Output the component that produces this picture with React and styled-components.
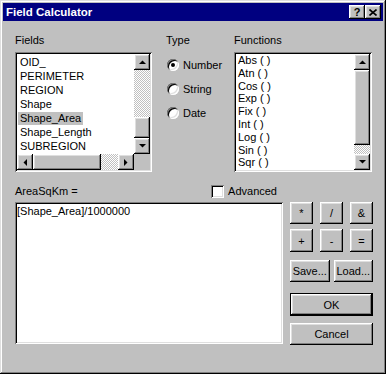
import React from 'react';
import styled, { createGlobalStyle, css } from 'styled-components';

const GlobalStyle = createGlobalStyle`
  html, body { margin: 0; padding: 0; background: #c0c0c0; }
  body {
    font-family: "Liberation Sans", Arial, sans-serif;
    font-size: 11px;
    color: #000;
  }
  * { box-sizing: border-box; }
`;

const raised = css`
  background: #c0c0c0;
  box-shadow: inset -1px -1px #000, inset 1px 1px #fff,
    inset -2px -2px #808080, inset 2px 2px #dfdfdf;
`;

const sunken = css`
  background: #fff;
  box-shadow: inset 1px 1px #808080, inset -1px -1px #fff,
    inset 2px 2px #000, inset -2px -2px #dfdfdf;
`;

const dither = css`
  background-color: #c0c0c0;
  background-image: conic-gradient(#fff 25%, #c0c0c0 0 50%, #fff 0 75%, #c0c0c0 0);
  background-size: 2px 2px;
`;

const Window = styled.div`
  width: 386px;
  height: 374px;
  padding: 3px;
  display: flex;
  flex-direction: column;
  background: #c0c0c0;
  box-shadow: inset -1px -1px #000, inset 1px 1px #dfdfdf,
    inset -2px -2px #808080, inset 2px 2px #fff;
`;

const TitleBar = styled.div`
  height: 18px;
  background: #000080;
  color: #fff;
  display: flex;
  align-items: center;
  padding: 0 2px 0 3px;
`;

const Title = styled.div`
  flex: 1;
  font-weight: bold;
  font-size: 11.5px;
`;

const TitleButton = styled.div`
  ${raised};
  width: 16px;
  height: 14px;
  display: flex;
  align-items: center;
  justify-content: center;
  color: #000;
  font-weight: bold;
  font-size: 11px;
`;

const Body = styled.div`
  flex: 1;
  padding: 13px 10px 0 12px;
  display: flex;
  flex-direction: column;
`;

const TopRow = styled.div`
  display: flex;
`;

const Column = styled.div`
  width: ${p => p.w}px;
  margin-right: ${p => p.mr || 0}px;
  display: flex;
  flex-direction: column;
`;

const Label = styled.div`
  height: 12px;
  line-height: 12px;
  margin-bottom: 6px;
`;

const ListBox = styled.div`
  ${sunken};
  height: 120px;
  padding: 2px;
  display: flex;
  flex-direction: column;
`;

const ListMain = styled.div`
  flex: 1;
  min-height: 0;
  display: flex;
`;

const Items = styled.div`
  flex: 1;
  overflow: hidden;
  padding-top: ${p => p.top || 0}px;
  padding-left: ${p => p.left || 0}px;
`;

const Row = styled.div`
  height: ${p => p.h}px;
  line-height: ${p => p.h}px;
  white-space: nowrap;
`;

const ItemText = styled.span`
  display: inline-block;
  line-height: 13px;
  padding: 0 2px;
  background: ${p => (p.selected ? '#c0c0c0' : 'transparent')};
`;

const ScrollBar = styled.div`
  display: flex;
  flex-direction: ${p => (p.horizontal ? 'row' : 'column')};
  ${p => (p.horizontal ? 'height: 16px; flex: 1;' : 'width: 16px;')}
`;

const BottomScrollRow = styled.div`
  height: 16px;
  display: flex;
`;

const ArrowButton = styled.div`
  ${raised};
  width: 16px;
  height: 16px;
  flex: none;
  display: flex;
  align-items: center;
  justify-content: center;
`;

const Track = styled.div`
  ${dither};
  flex: 1;
  display: flex;
  flex-direction: ${p => (p.horizontal ? 'row' : 'column')};
`;

const Gap = styled.div`
  flex: none;
  ${p => (p.horizontal ? `width: ${p.size}px;` : `height: ${p.size}px;`)}
`;

const Thumb = styled.div`
  ${raised};
  flex: none;
  ${p => (p.horizontal ? `width: ${p.size}px;` : `height: ${p.size}px;`)}
`;

const Corner = styled.div`
  width: 16px;
  height: 16px;
  background: #c0c0c0;
`;

const RadioGroup = styled.div`
  padding-top: 1px;
  display: flex;
  flex-direction: column;
`;

const RadioRow = styled.div`
  height: 24px;
  display: flex;
  align-items: center;
  gap: 4px;
  padding-left: 1px;
`;

const RadioCircle = styled.div`
  width: 12px;
  height: 12px;
  border-radius: 50%;
  position: relative;
  background: #fff;
  box-shadow: inset 1px 1px #808080, inset -1px -1px #fff,
    inset 2px 2px #000, inset -2px -2px #dfdfdf;
  &::after {
    content: '';
    display: ${p => (p.checked ? 'block' : 'none')};
    position: absolute;
    left: 4px;
    top: 4px;
    width: 4px;
    height: 4px;
    border-radius: 50%;
    background: #000;
  }
`;

const BottomRow = styled.div`
  margin-top: 12px;
  display: flex;
  gap: 7px;
`;

const ExprColumn = styled.div`
  width: 268px;
  display: flex;
  flex-direction: column;
`;

const ExprHeader = styled.div`
  height: 14px;
  margin-bottom: 4px;
  display: flex;
  align-items: center;
  justify-content: space-between;
  padding-right: 6px;
`;

const CheckLabel = styled.label`
  display: flex;
  align-items: center;
  gap: 4px;
`;

const CheckBox = styled.div`
  ${sunken};
  width: 13px;
  height: 13px;
`;

const ExprBox = styled.div`
  ${sunken};
  height: 142px;
  padding: 3px 2px;
  line-height: 12px;
`;

const ButtonColumn = styled.div`
  width: 83px;
  padding-top: 18px;
  display: flex;
  flex-direction: column;
`;

const ButtonRow = styled.div`
  display: flex;
  gap: ${p => p.gap || 0}px;
  margin-top: ${p => p.mt || 0}px;
`;

const Button = styled.div`
  ${raised};
  flex: 1;
  height: ${p => p.h}px;
  display: flex;
  align-items: center;
  justify-content: center;
  font-size: 11px;
  ${p =>
    p.isDefault &&
    css`
      box-shadow: inset 0 0 0 1px #000, inset -2px -2px #000, inset 2px 2px #fff,
        inset -3px -3px #808080, inset 3px 3px #dfdfdf;
    `}
`;

const Arrow = ({ dir }) => {
  const pts = {
    up: '0,4 7,4 3.5,0.5',
    down: '0,0 7,0 3.5,3.5',
    left: '4,0 4,7 0.5,3.5',
    right: '0,0 0,7 3.5,3.5',
  }[dir];
  const vertical = dir === 'up' || dir === 'down';
  return (
    <svg width={vertical ? 7 : 4} height={vertical ? 4 : 7} viewBox={vertical ? '0 0 7 4' : '0 0 4 7'}>
      <polygon points={pts} fill="#000" />
    </svg>
  );
};

const VScroll = ({ before, size }) => (
  <ScrollBar>
    <ArrowButton><Arrow dir="up" /></ArrowButton>
    <Track>
      <Gap size={before} />
      <Thumb size={size} />
    </Track>
    <ArrowButton><Arrow dir="down" /></ArrowButton>
  </ScrollBar>
);

const HScroll = ({ before, size }) => (
  <ScrollBar horizontal>
    <ArrowButton><Arrow dir="left" /></ArrowButton>
    <Track horizontal>
      <Gap horizontal size={before} />
      <Thumb horizontal size={size} />
    </Track>
    <ArrowButton><Arrow dir="right" /></ArrowButton>
  </ScrollBar>
);

const fields = ['OID_', 'PERIMETER', 'REGION', 'Shape', 'Shape_Area', 'Shape_Length', 'SUBREGION'];
const functions = ['Abs ( )', 'Atn ( )', 'Cos ( )', 'Exp ( )', 'Fix ( )', 'Int ( )', 'Log ( )', 'Sin ( )', 'Sqr ( )'];
const types = ['Number', 'String', 'Date'];

const App = () => {
  return (
    <Window>
      <GlobalStyle />
      <TitleBar>
        <Title>Field Calculator</Title>
        <TitleButton>?</TitleButton>
        <TitleButton>
          <svg width="8" height="7" viewBox="0 0 8 7">
            <path d="M0.5 0.5 L7.5 6.5 M7.5 0.5 L0.5 6.5" stroke="#000" strokeWidth="1.6" />
          </svg>
        </TitleButton>
      </TitleBar>
      <Body>
        <TopRow>
          <Column w={137} mr={14}>
            <Label>Fields</Label>
            <ListBox>
              <ListMain>
                <Items top={1} left={1}>
                  {fields.map(f => (
                    <Row key={f} h={14}>
                      <ItemText selected={f === 'Shape_Area'}>{f}</ItemText>
                    </Row>
                  ))}
                </Items>
                <VScroll before={47} size={21} />
              </ListMain>
              <BottomScrollRow>
                <HScroll before={0} size={68} />
                <Corner />
              </BottomScrollRow>
            </ListBox>
          </Column>
          <Column w={68}>
            <Label>Type</Label>
            <RadioGroup>
              {types.map(t => (
                <RadioRow key={t}>
                  <RadioCircle checked={t === 'Number'} />
                  {t}
                </RadioRow>
              ))}
            </RadioGroup>
          </Column>
          <Column w={138}>
            <Label>Functions</Label>
            <ListBox>
              <ListMain>
                <Items left={0}>
                  {functions.map(f => (
                    <Row key={f} h={12.8}>
                      <ItemText>{f}</ItemText>
                    </Row>
                  ))}
                </Items>
                <VScroll before={0} size={75} />
              </ListMain>
            </ListBox>
          </Column>
        </TopRow>
        <BottomRow>
          <ExprColumn>
            <ExprHeader>
              <span>AreaSqKm =</span>
              <CheckLabel>
                <CheckBox />
                Advanced
              </CheckLabel>
            </ExprHeader>
            <ExprBox>[Shape_Area]/1000000</ExprBox>
          </ExprColumn>
          <ButtonColumn>
            <ButtonRow gap={7}>
              <Button h={22}>*</Button>
              <Button h={22}>/</Button>
              <Button h={22}>&amp;</Button>
            </ButtonRow>
            <ButtonRow gap={7} mt={5}>
              <Button h={23}>+</Button>
              <Button h={23}>-</Button>
              <Button h={23}>=</Button>
            </ButtonRow>
            <ButtonRow gap={4} mt={8}>
              <Button h={22}>Save...</Button>
              <Button h={22}>Load...</Button>
            </ButtonRow>
            <ButtonRow mt={11}>
              <Button h={23} isDefault>OK</Button>
            </ButtonRow>
            <ButtonRow mt={7}>
              <Button h={22}>Cancel</Button>
            </ButtonRow>
          </ButtonColumn>
        </BottomRow>
      </Body>
    </Window>
  );
};

export default App;
